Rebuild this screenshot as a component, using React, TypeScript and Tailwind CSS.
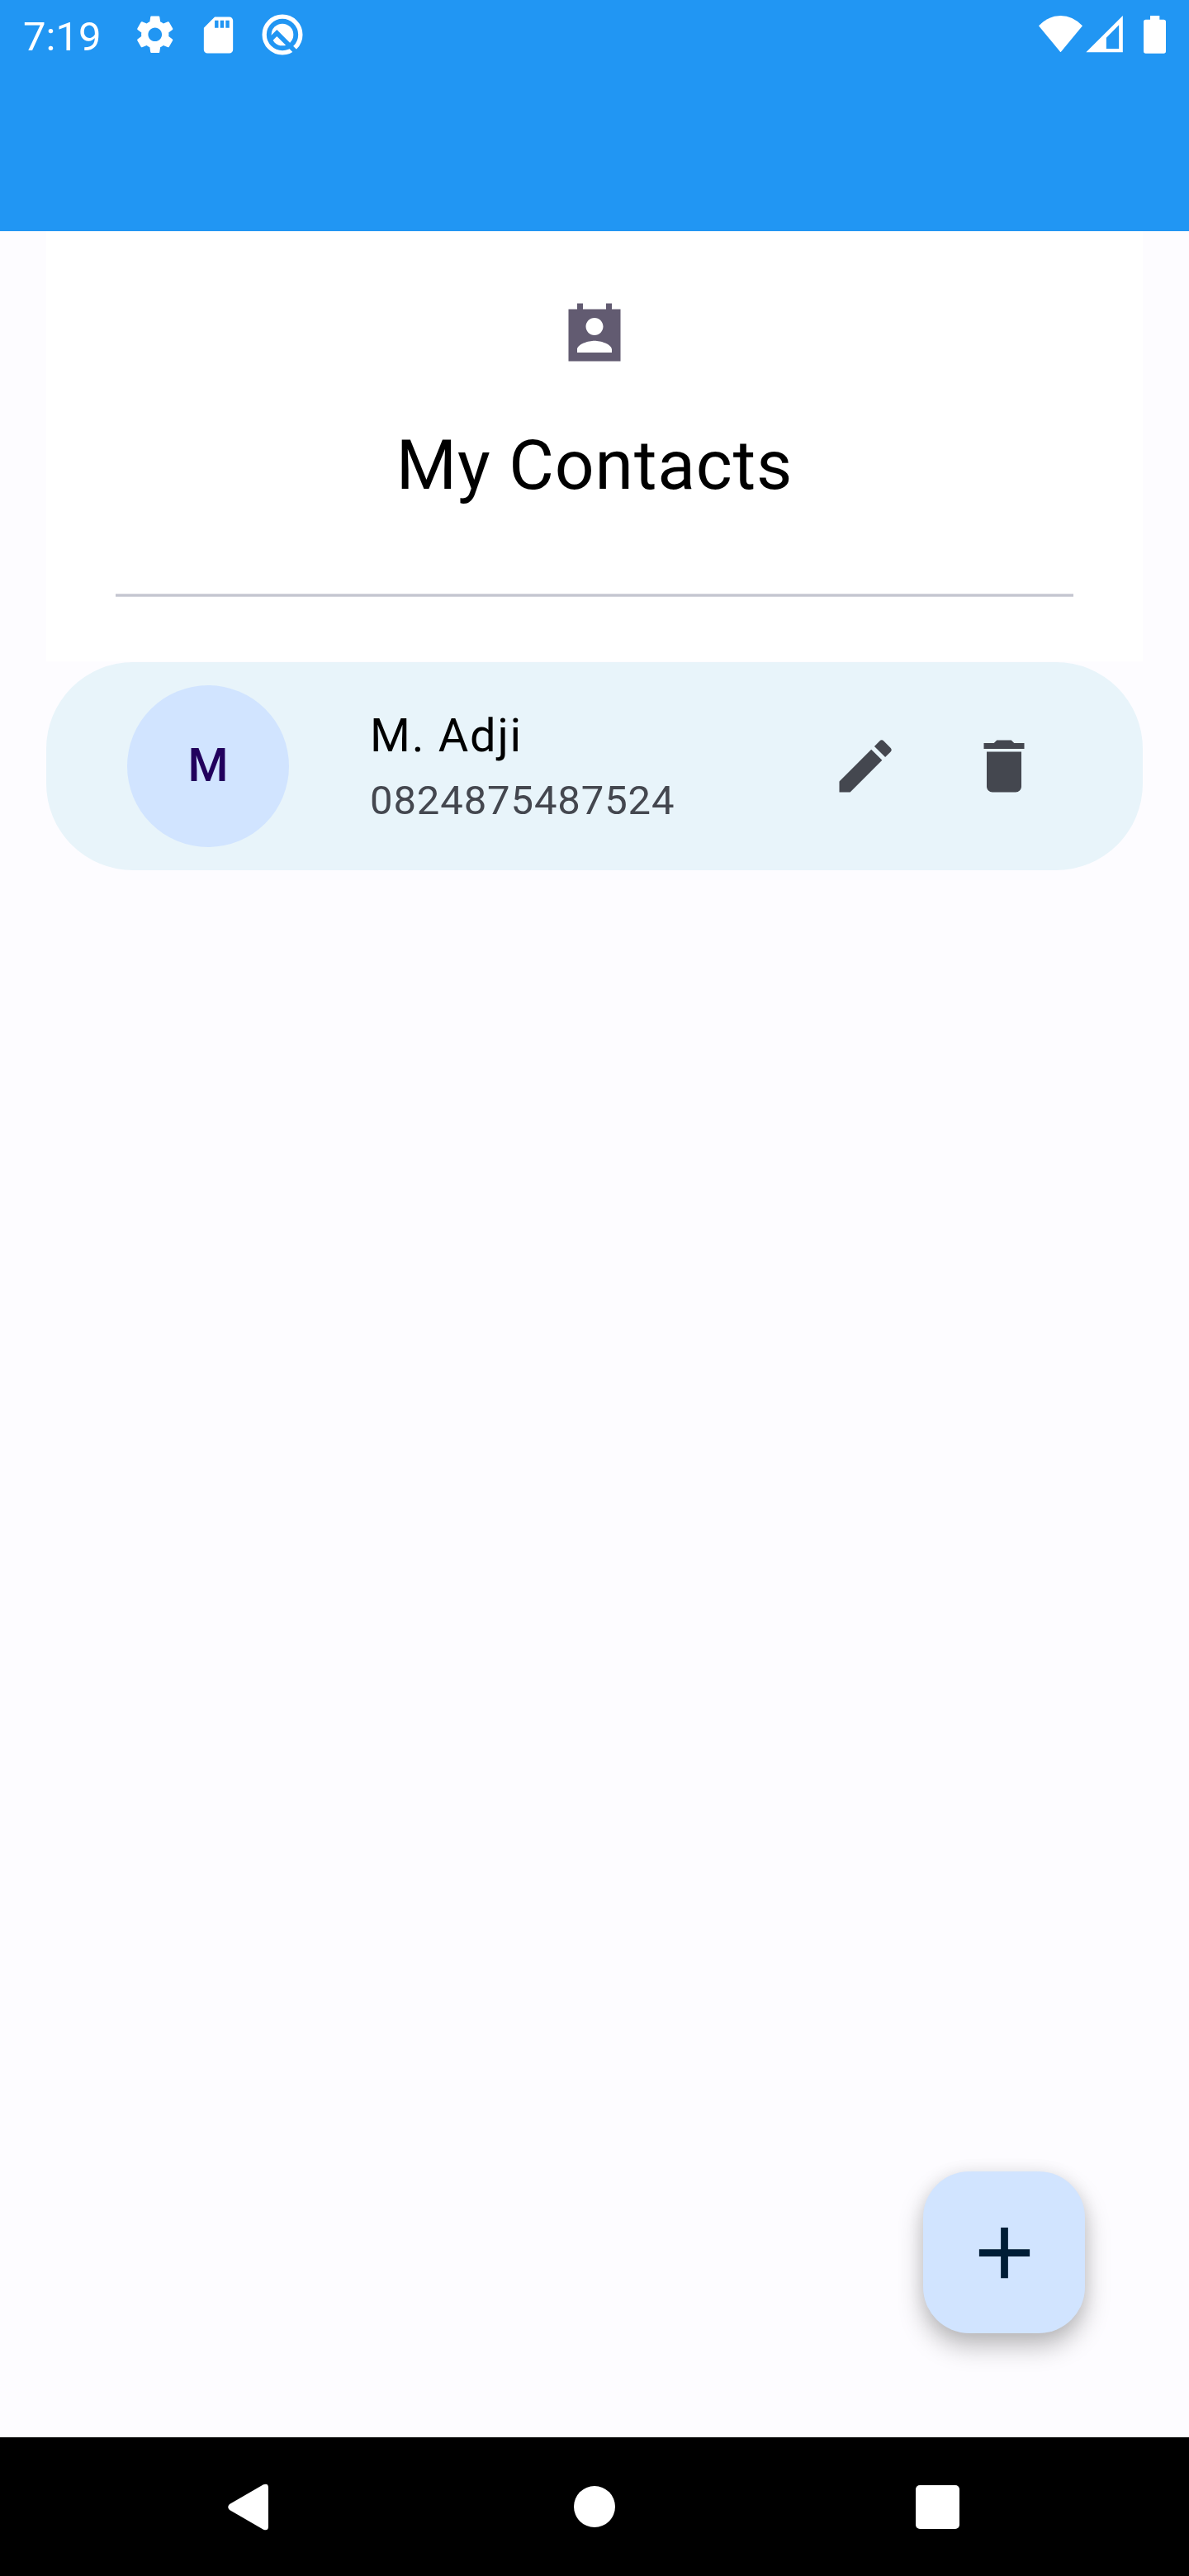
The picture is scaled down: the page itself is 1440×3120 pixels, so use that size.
import type { ReactNode } from "react";
import { MdAdd, MdDelete, MdEdit, MdSdCard, MdSettings } from "react-icons/md";

type Contact = { name: string; phone: string };

const contacts: Contact[] = [{ name: "M. Adji", phone: "0824875487524" }];

function AssistantIcon() {
  return (
    <svg viewBox="0 0 150 150" className="h-[50px] w-[50px]" fill="none">
      <circle cx="75" cy="75" r="65.5" stroke="#fff" strokeWidth="16" />
      <circle cx="75" cy="75" r="40" fill="#fff" />
      <path d="M31 93 L55 69 L135 149" stroke="#2196f3" strokeWidth="17" />
    </svg>
  );
}

function WifiIcon() {
  return (
    <svg viewBox="84 57 159 134" className="h-[44.67px] w-[53px]" fill="#fff">
      <path d="M163.500 190 L84 94 Q119 57 163.500 57 Q208 57 243 94 Z" />
    </svg>
  );
}

function SignalIcon() {
  return (
    <svg viewBox="255 58 135 134" className="h-[44.67px] w-[45px]" fill="#fff" fillRule="evenodd">
      <path d="M256 191 H389.500 V58 Z M329.500 178 H375.500 V92 L329.500 138 Z" />
    </svg>
  );
}

function BatteryIcon() {
  return (
    <svg viewBox="465 57 81 138" className="h-[46px] w-[27px]" fill="#fff">
      <path d="M489 57 H523 V71.500 H538 Q546 71.500 546 79.500 V186 Q546 194 538 194 H473 Q465 194 465 186 V79.500 Q465 71.500 473 71.500 H489 Z" />
    </svg>
  );
}

function ContactCalendarIcon() {
  return (
    <svg viewBox="0 0 24 24" className="h-[84px] w-[84px]" fill="#625b71">
      <path d="M21 3h-3V1h-2v2H8V1H6v2H3v18h18V3zm-9 3c1.650 0 3 1.350 3 3s-1.350 3-3 3-3-1.350-3-3 1.350-3 3-3zm6 12H6v-1c0-2 4-3.100 6-3.100s6 1.100 6 3.100v1z" />
    </svg>
  );
}

function StatusBar() {
  return (
    <div className="flex h-[84px] items-center text-white">
      <span className="ml-7 w-[100px] text-[49px] leading-[60px] mt-[5px]">7:19</span>
      <MdSettings className="ml-[32px] size-[55.5px] shrink-0" />
      <MdSdCard className="ml-[22.5px] size-[53px] shrink-0" />
      <span className="ml-[25.5px]">
        <AssistantIcon />
      </span>
      <span className="ml-auto mr-[4.500px] -mt-[2px]">
        <WifiIcon />
      </span>
      <span className="mr-[25px] -mt-[1px]">
        <SignalIcon />
      </span>
      <span className="mr-7">
        <BatteryIcon />
      </span>
    </div>
  );
}

function IconButton({ label, children }: { label: string; children: ReactNode }) {
  return (
    <button aria-label={label} className="flex size-[168px] items-center justify-center text-[#44474f]">
      {children}
    </button>
  );
}

function ContactRow({ name, phone }: Contact) {
  return (
    <li className="mx-14 flex h-[252px] items-center rounded-[105px] bg-[#e8f4fa] pr-[84px] pl-[98px]">
      <div className="flex size-[196px] items-center justify-center rounded-full bg-[#d1e4ff] text-[56px] font-medium text-[#22005d]">
        <span className="-mt-[2px]">{name[0]}</span>
      </div>
      <div className="ml-[98px] flex-1">
        <p className="text-[56px] leading-[84px] tracking-[1.75px] text-black">{name}</p>
        <p className="text-[49px] leading-[74px] tracking-[0.875px] text-[#44474f]">{phone}</p>
      </div>
      <IconButton label="Edit">
        <MdEdit className="size-[84px]" />
      </IconButton>
      <IconButton label="Delete">
        <MdDelete className="size-[84px]" />
      </IconButton>
    </li>
  );
}

function NavigationBar() {
  return (
    <nav className="flex h-[168px] items-center bg-black">
      <svg viewBox="0 0 49 57" className="ml-[276px] h-[57px] w-[49px]" fill="#fff">
        <path d="M2 25 L43 1.300 Q49 -1 49 5 V52 Q49 58 43 55.700 L2 32 Q-1.500 28.500 2 25 Z" />
      </svg>
      <div className="ml-[370px] size-[50px] rounded-full bg-white" />
      <div className="ml-[364px] size-[53px] rounded-[5px] bg-white" />
    </nav>
  );
}

export default function App() {
  return (
    <div className="flex h-[3120px] w-[1440px] flex-col bg-[#fdfcff] font-['Roboto',sans-serif]">
      <header className="h-[280px] bg-[#2196f3]">
        <StatusBar />
      </header>
      <main className="flex flex-1 flex-col">
        <section className="mx-14 mb-px flex h-[521px] flex-col items-center bg-white pt-[84px]">
          <ContactCalendarIcon />
          <h1 className="mt-[66px] text-[84px] leading-[100px] tracking-[0.875px] text-black">My Contacts</h1>
          <div className="mt-[105px] h-1 w-[1160px] border-y border-[#d4d5dd] bg-[#c4c6d0]" />
        </section>
        <ul>
          {contacts.map((contact) => (
            <ContactRow key={contact.phone} {...contact} />
          ))}
        </ul>
        <button
          aria-label="Add contact"
          className="mt-auto mr-[126px] mb-[126px] flex size-[196px] items-center justify-center self-end rounded-[56px] bg-[#d1e4ff] text-[#001d36] shadow-[0_16px_30px_rgba(0,0,0,0.26),0_0_20px_rgba(0,0,0,0.07)]"
        >
          <MdAdd className="size-[105px]" />
        </button>
      </main>
      <NavigationBar />
    </div>
  );
}
